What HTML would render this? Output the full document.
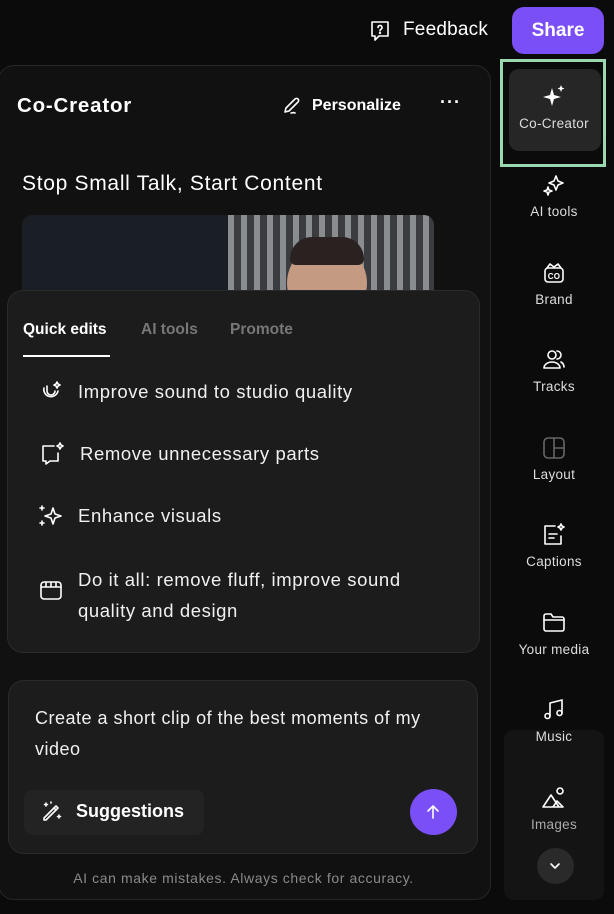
<!DOCTYPE html>
<html><head><meta charset="utf-8"><style>
*{margin:0;padding:0;box-sizing:border-box}
body{width:614px;height:914px;background:#0b0b0b;font-family:"Liberation Sans",sans-serif;color:#fff;position:relative;overflow:hidden}
.abs{position:absolute}
svg{fill:none;stroke:#fff;stroke-width:1.6;stroke-linecap:round;stroke-linejoin:round}
.nav{position:absolute;left:504px;width:100px;text-align:center;font-size:13.5px;color:#ddd;letter-spacing:0.3px}
.nav svg{display:block;margin:0 auto 6px}
.item{position:absolute;left:38px;display:flex;align-items:center;font-size:18.5px;color:#f0f0f0;letter-spacing:0.6px}
</style></head><body>
<!-- top bar -->
<svg class="abs" style="left:368px;top:19px" width="24" height="24" viewBox="0 0 24 24"><path d="M4 3h16v14h-9l-4 4v-4H4z"/><path d="M10 8.5a2 2 0 1 1 3 1.7c-.7.4-1 .8-1 1.6" /><circle cx="12" cy="14" r=".4" fill="#fff"/></svg>
<div class="abs" style="left:403px;top:19px;font-size:19px;letter-spacing:0.2px">Feedback</div>
<div class="abs" style="left:512px;top:7px;width:92px;height:47px;background:#7a4ff5;border-radius:12px;font-size:19px;font-weight:bold;text-align:center;line-height:47px">Share</div>
<!-- main panel -->
<div class="abs" style="left:-2px;top:65px;width:493px;height:835px;background:#111;border:1px solid #262626;border-radius:16px"></div>
<div class="abs" style="left:17px;top:94px;font-size:20.5px;font-weight:bold;letter-spacing:0.8px">Co-Creator</div>
<svg class="abs" style="left:282px;top:96px" width="20" height="20" viewBox="0 0 20 20"><path d="M3 16l1-4 9-9a2 2 0 0 1 3 3l-9 9z"/><path d="M9 17c2 0 2-1 4 0"/></svg>
<div class="abs" style="left:312px;top:97px;font-size:16px;font-weight:bold">Personalize</div>
<div class="abs" style="left:440px;top:92px;font-size:18px;font-weight:bold;letter-spacing:1px">···</div>
<div class="abs" style="left:22px;top:172px;font-size:21px;letter-spacing:0.7px">Stop Small Talk, Start Content</div>
<div class="abs" style="left:22px;top:215px;width:412px;height:90px;border-radius:10px;overflow:hidden;background:#1a1e25">
 <div class="abs" style="left:206px;top:0;width:206px;height:90px;background:repeating-linear-gradient(90deg,#8a8d90 0 6px,#3a3c40 6px 13px)"></div>
 <div class="abs" style="left:265px;top:28px;width:80px;height:80px;border-radius:40px;background:#c49a82"></div>
 <div class="abs" style="left:268px;top:22px;width:74px;height:28px;border-radius:30px 30px 8px 8px;background:#2a2220"></div>
</div>
<!-- quick edits card -->
<div class="abs" style="left:7px;top:290px;width:473px;height:363px;background:#1c1c1c;border:1px solid #2a2a2a;border-radius:16px"></div>
<div class="abs" style="left:23px;top:321px;font-size:15.5px;font-weight:bold">Quick edits</div>
<div class="abs" style="left:23px;top:355px;width:87px;height:2px;background:#fff"></div>
<div class="abs" style="left:141px;top:321px;font-size:15.5px;font-weight:bold;color:#777">AI tools</div>
<div class="abs" style="left:230px;top:321px;font-size:15.5px;font-weight:bold;color:#777">Promote</div>
<div class="item" style="top:379px"><svg width="26" height="26" viewBox="0 0 26 26"><path d="M6 9a7 7 0 0 0 14 3"/><path d="M9 7v5a4 4 0 0 0 8 0"/><path d="M19 3l1 2 2 1-2 1-1 2-1-2-2-1 2-1z"/></svg><span style="margin-left:14px">Improve sound to studio quality</span></div>
<div class="item" style="top:441px"><svg width="28" height="26" viewBox="0 0 28 26"><path d="M16 5H5v15h3v3l4-3h8v-8"/><path d="M22 2l1 2 2 1-2 1-1 2-1-2-2-1 2-1z"/></svg><span style="margin-left:14px">Remove unnecessary parts</span></div>
<div class="item" style="top:503px"><svg width="26" height="26" viewBox="0 0 26 26"><path d="M15 5l2 6 6 2-6 2-2 6-2-6-6-2 6-2z"/><path d="M4 3v4M2 5h4M4 18v4M2 20h4"/></svg><span style="margin-left:14px">Enhance visuals</span></div>
<div class="item" style="top:578px"><svg width="26" height="26" viewBox="0 0 26 26"><rect x="3" y="4" width="20" height="17" rx="3"/><path d="M3 9h20M8 4v5M13 4v5M18 4v5"/></svg></div>
<div class="abs" style="left:78px;top:564px;font-size:18.5px;line-height:31px;color:#f0f0f0;letter-spacing:0.6px">Do it all: remove fluff, improve sound<br>quality and design</div>
<!-- input card -->
<div class="abs" style="left:8px;top:680px;width:470px;height:174px;background:#1c1c1c;border:1px solid #2a2a2a;border-radius:16px"></div>
<div class="abs" style="left:35px;top:703px;font-size:18px;line-height:31px;color:#f0f0f0;letter-spacing:0.5px">Create a short clip of the best moments of my<br>video</div>
<div class="abs" style="left:24px;top:790px;width:180px;height:45px;background:#232323;border-radius:8px"></div>
<svg class="abs" style="left:40px;top:800px" width="24" height="24" viewBox="0 0 24 24"><path d="M4 20l2 0 12-12-2-2-12 12z"/><path d="M14 8l2 2"/><path d="M6 3v3M4.5 4.5h3M19 15v3M17.5 16.5h3M11 2v1"/></svg>
<div class="abs" style="left:76px;top:801px;font-size:18px;font-weight:bold">Suggestions</div>
<div class="abs" style="left:410px;top:789px;width:47px;height:46px;border-radius:50%;background:#7a4ff5"></div>
<svg class="abs" style="left:424px;top:803px" width="18" height="18" viewBox="0 0 18 18"><path d="M9 15V3M4 8l5-5 5 5"/></svg>
<div class="abs" style="left:0;top:870px;width:487px;text-align:center;font-size:14px;color:#8a8a8a;letter-spacing:0.6px">AI can make mistakes. Always check for accuracy.</div>
<!-- sidebar -->
<div class="abs" style="left:504px;top:730px;width:100px;height:170px;background:#141414;border-radius:10px"></div>
<div class="abs" style="left:500px;top:59px;width:106px;height:108px;border:3px solid #9ad8b0"></div>
<div class="abs" style="left:509px;top:69px;width:92px;height:82px;background:#262626;border-radius:10px"></div>
<div class="nav" style="top:84px"><svg width="26" height="26" viewBox="0 0 26 26" style="fill:#fff;stroke:none"><path d="M11 4l2 7 7 2-7 2-2 7-2-7-7-2 7-2z"/><path d="M20 1l1 2.5 2.5 1-2.5 1-1 2.5-1-2.5-2.5-1 2.5-1z"/></svg>Co-Creator</div>
<div class="nav" style="top:172px"><svg width="26" height="26" viewBox="0 0 26 26"><path d="M15 4l2 5 5 2-5 2-2 5-2-5-5-2 5-2z"/><path d="M7 15l1 3 3 1-3 1-1 3-1-3-3-1 3-1z"/></svg>AI tools</div>
<div class="nav" style="top:260px"><svg width="26" height="26" viewBox="0 0 26 26"><rect x="4" y="8" width="18" height="14" rx="3"/><path d="M6 8l3-4 4 3 4-3 3 4"/><text x="13" y="19" font-size="8" font-family="Liberation Sans" font-weight="bold" text-anchor="middle" stroke="none" fill="#fff">CO</text></svg>Brand</div>
<div class="nav" style="top:347px"><svg width="26" height="26" viewBox="0 0 26 26"><circle cx="11" cy="8" r="4"/><path d="M3 21a8 6 0 0 1 16 0z"/><path d="M16 4a4 4 0 0 1 0 8M20 15a6 6 0 0 1 3 5"/></svg>Tracks</div>
<div class="nav" style="top:435px"><svg width="26" height="26" viewBox="0 0 26 26" style="stroke:#666"><rect x="3" y="3" width="20" height="20" rx="4"/><path d="M13 3v20M13 13h10"/></svg>Layout</div>
<div class="nav" style="top:522px"><svg width="26" height="26" viewBox="0 0 26 26"><path d="M14 4H4v18h16v-8"/><path d="M8 12h8M8 16h5"/><path d="M20 2l1 2 2 1-2 1-1 2-1-2-2-1 2-1z"/></svg>Captions</div>
<div class="nav" style="top:610px"><svg width="26" height="26" viewBox="0 0 26 26"><path d="M3 6a2 2 0 0 1 2-2h5l2 3h9a2 2 0 0 1 2 2v10a2 2 0 0 1-2 2H5a2 2 0 0 1-2-2z"/><path d="M3 10h20"/></svg>Your media</div>
<div class="nav" style="top:697px"><svg width="26" height="26" viewBox="0 0 26 26"><path d="M9 19V6l12-3v13"/><circle cx="6.5" cy="19" r="2.5"/><circle cx="18.5" cy="16" r="2.5"/></svg>Music</div>
<div class="nav" style="top:785px;color:#aaa"><svg width="26" height="26" viewBox="0 0 26 26"><path d="M2 22l8-12 8 12z M12 22l4-6 6 6z"/><circle cx="19" cy="6" r="3"/></svg>Images</div>
<div class="abs" style="left:537px;top:848px;width:37px;height:36px;border-radius:50%;background:#2a2a2a"></div>
<svg class="abs" style="left:548px;top:859px" width="14" height="14" viewBox="0 0 14 14"><path d="M3 5l4 4 4-4"/></svg>
</body></html>
